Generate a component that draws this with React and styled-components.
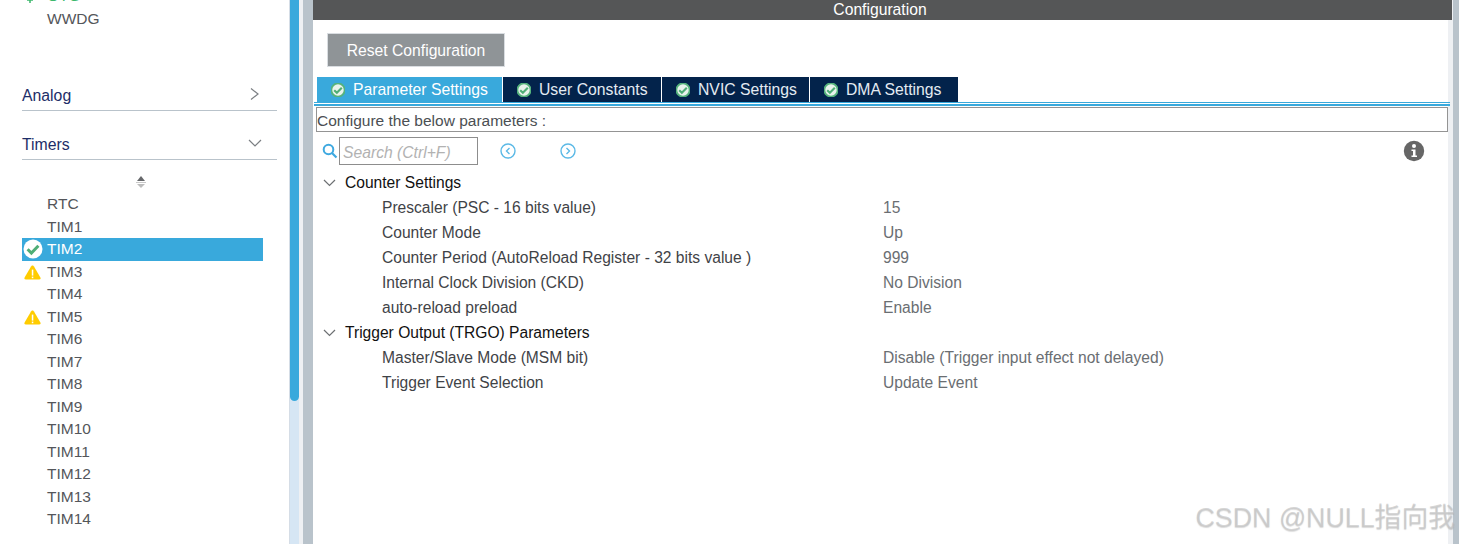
import React from "react";
import styled, { createGlobalStyle } from "styled-components";

const Global = createGlobalStyle`
  html, body { margin: 0; padding: 0; background: #fff; }
  body { font-family: "Liberation Sans", Arial, sans-serif; overflow: hidden; }
`;
const Page = styled.div`
  width: 1459px; height: 544px; display: flex; overflow: hidden; position: relative; background: #fff;
`;
const Sidebar = styled.aside`
  width: 289px; flex: none; height: 544px; overflow: hidden; border-right: 1px solid #d5dde6; box-sizing: content-box;
`;
const SideInner = styled.div`
  margin-top: -15px; padding-left: 22px; width: 241px;
`;
const Peri = styled.div`
  height: 22.5px; line-height: 22.5px; font-size: 15.5px; color: ${p => p.$color || "#54565a"};
  padding-left: 25px; position: relative;
  background: ${p => (p.$active ? "#39a9dc" : "transparent")};
`;
const Badge = styled.span`
  position: absolute; left: ${p => p.$left ?? 1}px; top: ${p => p.$top ?? 3}px; display: block; line-height: 0;
`;
const Section = styled.div`
  display: flex; justify-content: space-between; align-items: center; width: 255px;
  height: 27px; border-bottom: 1px solid #b9c3cb; color: #1d2d68; font-size: 15.8px;
  margin-top: ${p => p.$mt}px; box-sizing: content-box;
  line-height: 25px; padding-bottom: 0;
`;
const SectionLabel = styled.span`
  margin-top: -3px;
`;
const SectionIcon = styled.svg`
  width: 14px; height: 14px; fill: none; stroke: #7b7f83; stroke-width: 1.2; margin-top: -6px; margin-right: 15px;
`;
const Sorter = styled.svg`
  display: block; width: 12px; height: 16px; margin: 15px 0 2px 113px;
`;
const ScrollTrack = styled.div`
  width: 9px; flex: none; height: 544px; background: #d6e6f4;
`;
const ScrollThumb = styled.div`
  height: 401px; background: #39a9dc; border-radius: 0 0 5px 5px;
`;
const Gutter = styled.div`
  width: ${p => p.$w}px; flex: none; background: #eef0f3;
`;
const Rail = styled.div`
  width: ${p => p.$w}px; flex: none; background: #b9c3cb;
`;
const Panel = styled.main`
  width: 1139px; flex: none; height: 544px; display: flex; flex-direction: column; background: #eef0f3;
`;
const PanelBody = styled.div`
  flex: 1; margin-right: 4px; display: flex; flex-direction: column; background: #fff;
`;
const TitleBar = styled.div`
  height: 20px; line-height: 19px; background: #555657; color: #fff; text-align: center; font-size: 15.7px; flex: none; padding-right: 5px;
`;
const ResetButton = styled.button`
  display: block; margin: 13px 0 0 14px; width: 178px; height: 34px; border: 1px solid #d9dde1;
  background: #8f9497; color: #fff; font: 15.7px "Liberation Sans", Arial, sans-serif; padding: 1px 0 0; flex: none;
`;
const Tabs = styled.div`
  display: flex; margin: 10px 0 0 4px; height: 25px; flex: none;
`;
const Tab = styled.div`
  height: 25px; width: ${p => p.$w}px; flex: none; box-sizing: border-box; display: flex; align-items: center;
  background: ${p => (p.$active ? "#39a9dc" : "#03234b")}; color: ${p => (p.$active ? "#fff" : "#e4ebf2")};
  border-right: 1px solid #fff; padding-left: 14px; gap: 8px; font-size: 15.75px;
`;
const TabRule = styled.div`
  height: 4px; flex: none; margin: 0 -2px 1px 1px; box-sizing: border-box; border-top: 1px solid #39a9dc; border-bottom: 2px solid #39a9dc;
`;
const Caption = styled.div`
  height: 25px; line-height: 25px; box-sizing: border-box; border: 1px solid #949494; margin: 0 0 0 3px;
  color: #4b4f53; font-size: 15.5px; flex: none;
`;
const SearchRow = styled.div`
  display: flex; align-items: center; height: 28px; padding: 0 23px 0 9px; flex: none; margin-top: 5px;
`;
const SearchBox = styled.div`
  width: 139px; height: 28px; box-sizing: border-box; border: 1px solid #8d8d8d; color: #b2b2b2; font-style: italic; font-size: 15.7px;
  line-height: 28px; padding: 1px 0 0 3px; margin-left: 1px;
`;
const NavIcon = styled.svg`
  width: 16px; height: 16px; fill: none; stroke: #5bb9e6; stroke-width: 1.4; margin-left: ${p => p.$ml}px;
`;
const InfoIcon = styled.svg`
  width: 22px; height: 22px; margin-left: auto;
`;
const Tree = styled.div`
  margin-top: 5px;
`;
const Group = styled.div`
  height: 25px; display: flex; align-items: center; padding-left: 10px; color: #111; font-size: 15.6px;
`;
const GroupIcon = styled.svg`
  width: 13px; height: 13px; fill: none; stroke: #6d7073; stroke-width: 1.2; margin-right: 9px; margin-top: -1px;
`;
const Row = styled.div`
  height: 25px; display: grid; grid-template-columns: 501px 1fr; padding-left: 69px; align-items: center; color: #3f4347; font-size: 15.6px;
`;
const Value = styled.span`
  color: #6a6e72;
`;
const Watermark = styled.div`
  position: absolute; right: 4px; bottom: 9px; font-size: 26.8px; line-height: 34px; color: rgba(190,190,190,.6); white-space: nowrap;
  font-family: "Liberation Sans", "Noto Sans CJK SC", sans-serif; text-shadow: 0 1px 1px rgba(150,150,150,.35);
`;

const Check = ({ size = 14, white }) => (
  <svg width={size} height={size} viewBox="0 0 20 20" style={{ flex: "none", display: "block" }}>
    <circle cx="10" cy="10" r="9.5" fill={white ? "#fff" : "#e9f3ec"} stroke={white ? "#fff" : "#55b27c"} strokeWidth={white ? 0 : 2.6} />
    <path d="M4.6 10.2 8.4 14 15.4 6.8" fill="none" stroke="#4fae76" strokeWidth="3" />
  </svg>
);
const Warn = () => (
  <svg width="17" height="15" viewBox="0 0 17 15" style={{ display: "block" }}>
    <path d="M8.5 .5 C9.2 .5 9.6 1 10 1.6 L16.4 12.6 C17 13.8 16.4 14.6 15.2 14.6 H1.8 C.6 14.6 0 13.8 .6 12.6 L7 1.6 C7.4 1 7.8 .5 8.5 .5Z" fill="#ffcc00" />
    <rect x="7.8" y="4.6" width="1.5" height="6" fill="#fff" />
    <rect x="7.8" y="11.6" width="1.5" height="1.6" fill="#fff" />
  </svg>
);
const timers = ["RTC","TIM1","TIM2","TIM3","TIM4","TIM5","TIM6","TIM7","TIM8","TIM9","TIM10","TIM11","TIM12","TIM13","TIM14"];
const tabs = [
  ["Parameter Settings", 186, true], ["User Constants", 159], ["NVIC Settings", 148], ["DMA Settings", 149],
];

export default function App() {
  return (
    <Page>
      <Global />
      <Sidebar>
        <SideInner>
          <Peri $color="#3cb86c">
            <Badge $left={4} $top={4}>
              <svg width="8" height="14" viewBox="0 0 8 14"><path d="M4 7v7M1 11h6" stroke="#3cb86c" strokeWidth="1.5" /></svg>
            </Badge>
            OTG
          </Peri>
          <Peri>WWDG</Peri>
          <Section $mt={53}>
            <SectionLabel>Analog</SectionLabel>
            <SectionIcon viewBox="0 0 14 14"><path d="M3 1.5 10 7 3 12.5" /></SectionIcon>
          </Section>
          <Section $mt={21}>
            <SectionLabel>Timers</SectionLabel>
            <SectionIcon viewBox="0 0 14 14"><path d="M1 4 7 10 13 4" /></SectionIcon>
          </Section>
          <Sorter viewBox="0 0 12 16">
            <path d="M6 1 10 6H2Z" fill="#66686b" />
            <path d="M1 7.5H11" stroke="#c8c8c8" />
            <path d="M2 9H10L6 13Z" fill="#bdbdbd" />
          </Sorter>
          {timers.map(t => (
            <Peri key={t} $active={t === "TIM2"} $color={t === "TIM2" ? "#fff" : undefined}>
              {t === "TIM2" && <Badge $left={1} $top={1}><Check size={20} white /></Badge>}
              {(t === "TIM3" || t === "TIM5") && <Badge $left={2} $top={4}><Warn /></Badge>}
              {t}
            </Peri>
          ))}
        </SideInner>
      </Sidebar>
      <ScrollTrack><ScrollThumb /></ScrollTrack>
      <Gutter $w={4} />
      <Rail $w={10} />
      <Panel>
        <TitleBar>Configuration</TitleBar>
        <PanelBody>
          <ResetButton>Reset Configuration</ResetButton>
          <Tabs>
            {tabs.map(([label, w, active]) => (
              <Tab key={label} $w={w} $active={active}><Check />{label}</Tab>
            ))}
          </Tabs>
          <TabRule />
          <Caption>Configure the below parameters :</Caption>
          <SearchRow>
            <svg width="16" height="16" viewBox="0 0 16 16" style={{ flex: "none" }}>
              <circle cx="6.5" cy="6.5" r="4.8" fill="none" stroke="#3fa9e0" strokeWidth="2" />
              <path d="M10 10 14.5 14.5" stroke="#3fa9e0" strokeWidth="2.2" />
            </svg>
            <SearchBox>Search (Ctrl+F)</SearchBox>
            <NavIcon $ml={22} viewBox="0 0 16 16"><circle cx="8" cy="8" r="7" /><path d="M9.5 5 6.5 8 9.5 11" /></NavIcon>
            <NavIcon $ml={44} viewBox="0 0 16 16"><circle cx="8" cy="8" r="7" /><path d="M6.5 5 9.5 8 6.5 11" /></NavIcon>
            <InfoIcon viewBox="0 0 22 22">
              <circle cx="11" cy="11" r="10.2" fill="#666" />
              <circle cx="11" cy="6" r="2" fill="#fff" />
              <path d="M8.5 9.5H12.5V15.5H14V17H8.5V15.5H10V11H8.5Z" fill="#fff" />
            </InfoIcon>
          </SearchRow>
          <Tree>
            <Group><GroupIcon viewBox="0 0 13 13"><path d="M1 4 6.5 9.5 12 4" /></GroupIcon>Counter Settings</Group>
            <Row><span>Prescaler (PSC - 16 bits value)</span><Value>15</Value></Row>
            <Row><span>Counter Mode</span><Value>Up</Value></Row>
            <Row><span>Counter Period (AutoReload Register - 32 bits value )</span><Value>999</Value></Row>
            <Row><span>Internal Clock Division (CKD)</span><Value>No Division</Value></Row>
            <Row><span>auto-reload preload</span><Value>Enable</Value></Row>
            <Group><GroupIcon viewBox="0 0 13 13"><path d="M1 4 6.5 9.5 12 4" /></GroupIcon>Trigger Output (TRGO) Parameters</Group>
            <Row><span>Master/Slave Mode (MSM bit)</span><Value>Disable (Trigger input effect not delayed)</Value></Row>
            <Row><span>Trigger Event Selection</span><Value>Update Event</Value></Row>
          </Tree>
        </PanelBody>
      </Panel>
      <Gutter $w={1} />
      <Rail $w={6} />
      <Watermark>CSDN @NULL指向我</Watermark>
    </Page>
  );
}
